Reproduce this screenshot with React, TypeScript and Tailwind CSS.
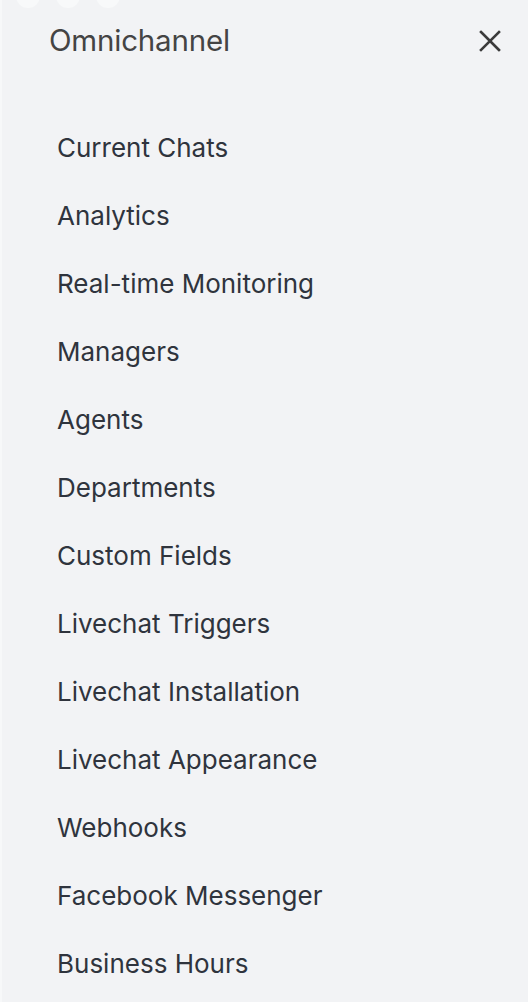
const items = [
  "Current Chats",
  "Analytics",
  "Real-time Monitoring",
  "Managers",
  "Agents",
  "Departments",
  "Custom Fields",
  "Livechat Triggers",
  "Livechat Installation",
  "Livechat Appearance",
  "Webhooks",
  "Facebook Messenger",
  "Business Hours",
];

export default function App() {
  return (
    <div
      className="relative h-[1002px] w-[528px] overflow-hidden bg-[#f2f3f5] border-l-2 border-[#f7f8f9]"
      style={{ fontFamily: "Inter, 'Noto Sans', sans-serif" }}
    >
      {/* window buttons, mostly cut off */}
      <div className="absolute -top-[16px] left-[14px] flex gap-[16px]">
        <div className="h-[24px] w-[24px] rounded-full bg-[#f8f9fa]" />
        <div className="h-[24px] w-[24px] rounded-full bg-[#f8f9fa]" />
        <div className="h-[24px] w-[24px] rounded-full bg-[#f8f9fa]" />
      </div>

      <div className="flex h-[82px] items-center justify-between pl-[47px] pr-[26px]">
        <h1 className="text-[29.5px] leading-none text-[#444] tracking-[-0.2px] -mt-[1px]">Omnichannel</h1>
        <button className="flex h-[24px] w-[24px] items-center justify-center text-[#3b3b3b]">
          <svg width="24" height="24" viewBox="0 0 24 24" fill="none" stroke="currentColor" strokeWidth="2.6" strokeLinecap="square">
            <path d="M3 3L21 21M21 3L3 21" />
          </svg>
        </button>
      </div>

      <nav className="flex flex-col pt-[31px]">
        {items.map((item) => (
          <a
            key={item}
            className="flex h-[68px] items-center pl-[55px] text-[26px] text-[#2f343d]"
          >
            {item}
          </a>
        ))}
      </nav>
    </div>
  );
}
